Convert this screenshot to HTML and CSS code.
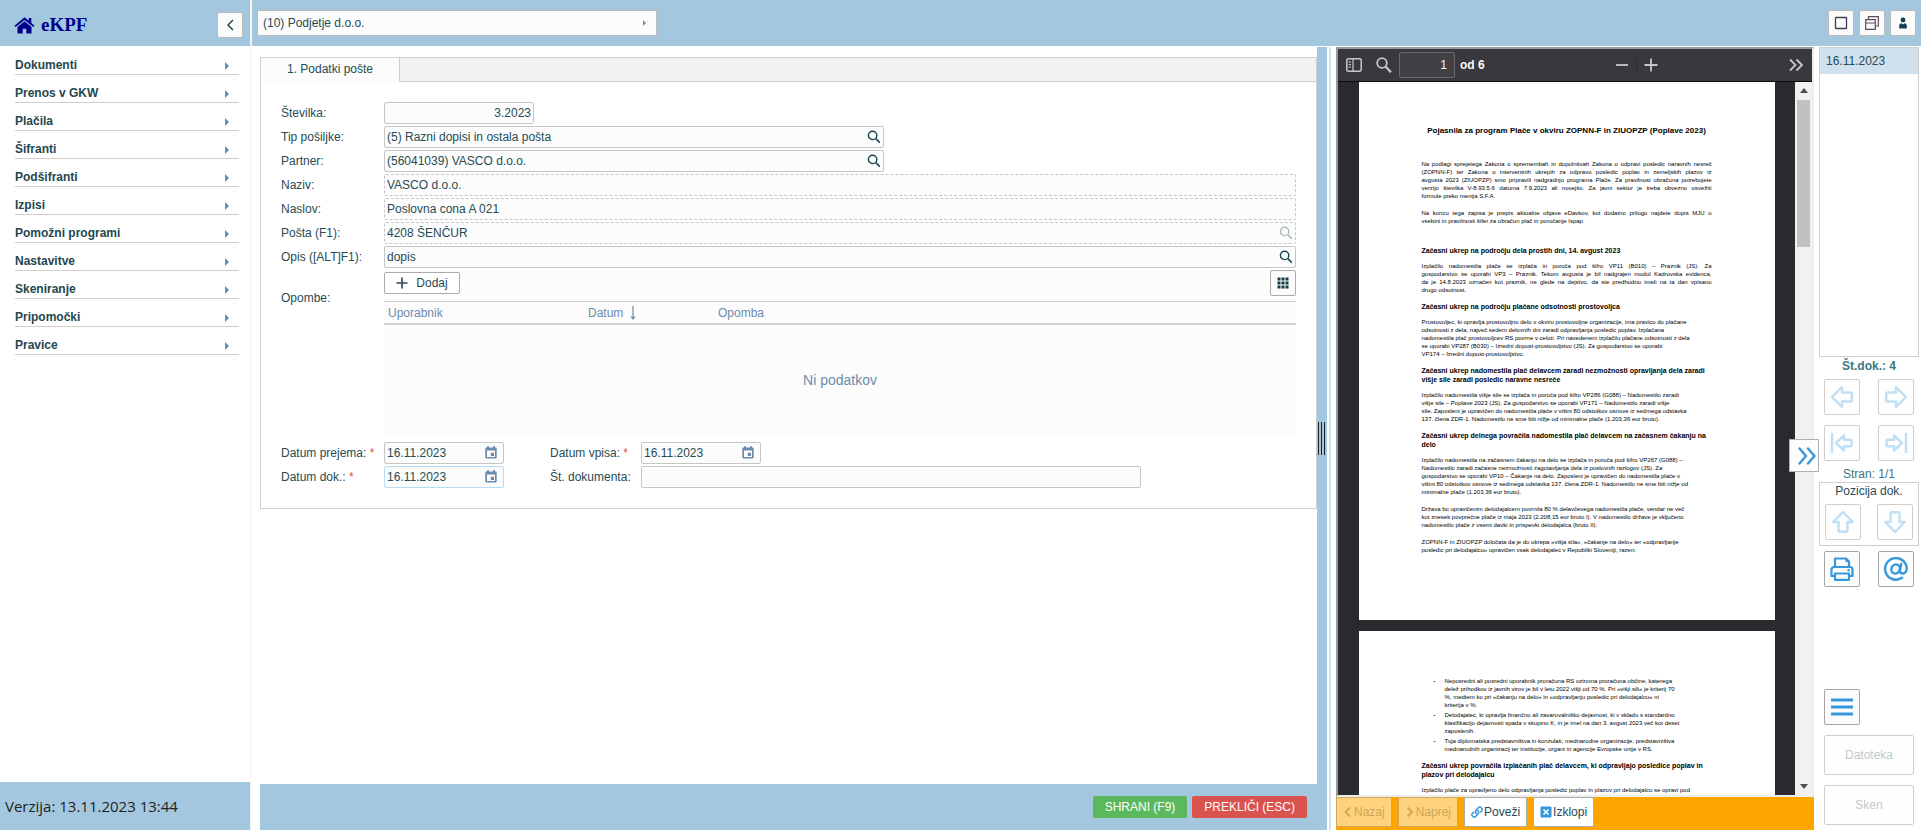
FILE: index.html
```html
<!DOCTYPE html>
<html lang="sl">
<head>
<meta charset="utf-8">
<title>eKPF</title>
<link rel="stylesheet" href="styles.css">
</head>
<body>
<svg class="defs" aria-hidden="true">
  <symbol id="search" viewBox="0 0 14 14"><circle cx="5.6" cy="5.4" r="4.200" fill="none" stroke="currentColor" stroke-width="1.4"/><path d="M8.6 8.5L12.8 12.6" stroke="currentColor" stroke-width="1.700"/></symbol>
  <symbol id="calendar" viewBox="0 0 12 13"><path d="M1.500 1.500h.5V.3h2v1.200h4V.3h2v1.200h.5c.7 0 1.200.5 1.200 1.200v8.600c0 .7-.5 1.200-1.200 1.200h-9c-.7 0-1.200-.5-1.200-1.200V2.700c0-.7.5-1.200 1.200-1.200zM2 4.600v6.300h8V4.600zM5.800 6.800h3.200v3.200H5.800z" fill="currentColor" fill-rule="evenodd"/></symbol>
  <symbol id="arrow" viewBox="0 0 24 24"><path d="M2 12L12 2.200V7.500H20.500a1.300 1.300 0 0 1 1.300 1.300V15.200a1.300 1.300 0 0 1-1.300 1.300H12V21.800z" fill="none" stroke="currentColor" stroke-width="2.400" stroke-linejoin="round"/></symbol>
  <symbol id="arrow-end" viewBox="0 0 24 24"><path d="M2 2V22M6 12L14 4.500V8.700H20.500a1 1 0 0 1 1 1V14.300a1 1 0 0 1-1 1H14V19.500z" fill="none" stroke="currentColor" stroke-width="2.400" stroke-linejoin="round"/></symbol>
</svg>

<div class="app">
  <aside class="sidebar">
    <header class="brand">
      <a class="brand-link" href="#">
        <svg class="house" viewBox="0 0 20 17"><path d="M10 .3L0 8.700l1.200 1.400L10 2.900l8.800 7.200L20 8.700l-3.200-2.700V1h-2.600v2.800z"/><path d="M10 4.300L3 10v6.600h5.200v-4.800h3.600v4.800H17V10z"/></svg>
        eKPF
      </a>
      <button class="icon-btn collapse" aria-label="Skrij meni"><svg viewBox="0 0 8 12"><path d="M7 1L2 6l5 5" fill="none" stroke="currentColor" stroke-width="1.500"/></svg></button>
    </header>
    <nav class="menu">
      <a href="#">Dokumenti</a>
      <a href="#">Prenos v GKW</a>
      <a href="#">Plačila</a>
      <a href="#">Šifranti</a>
      <a href="#">Podšifranti</a>
      <a href="#">Izpisi</a>
      <a href="#">Pomožni programi</a>
      <a href="#">Nastavitve</a>
      <a href="#">Skeniranje</a>
      <a href="#">Pripomočki</a>
      <a href="#">Pravice</a>
    </nav>
    <footer class="version">Verzija: 13.11.2023 13:44</footer>
  </aside>

  <div class="workspace">
    <header class="topbar">
      <button class="company">(10) Podjetje d.o.o.</button>
      <div class="top-actions">
        <button class="icon-btn" aria-label="Okno"><svg viewBox="0 0 14 14"><rect x="1.500" y="1.500" width="11" height="11" rx=".5" fill="none" stroke="#3b3f55" stroke-width="1.300"/></svg></button>
        <button class="icon-btn" aria-label="Okna"><svg viewBox="0 0 14 14"><path d="M3.500 3.500V.7h9.800V10H10.500M.7 3.700h9.600v9.600H.7zM.7 7h9.600" fill="none" stroke="#5b4a5e" stroke-width="1.200"/></svg></button>
        <button class="icon-btn" aria-label="Uporabnik"><svg viewBox="0 0 14 14"><circle cx="7" cy="4" r="2.400" fill="#153c4c"/><path d="M3.200 12.500V10c0-1.700 1.200-2.700 2.300-2.700L7 8.500l1.500-1.200c1.100 0 2.300 1 2.300 2.700v2.500z" fill="#153c4c"/></svg></button>
      </div>
    </header>

    <div class="panes">
      <main class="main">
        <section class="tabs">
          <div class="tab-strip"><button class="tab">1. Podatki pošte</button></div>
          <form class="form">
            <label for="stevilka">Številka:</label>
            <div class="field short"><input id="stevilka" class="number" value="3.2023"></div>
            <label for="tip">Tip pošiljke:</label>
            <div class="field medium"><input id="tip" value="(5) Razni dopisi in ostala pošta"><svg class="search"><use href="#search"/></svg></div>
            <label for="partner">Partner:</label>
            <div class="field medium"><input id="partner" value="(56041039) VASCO d.o.o."><svg class="search"><use href="#search"/></svg></div>
            <label for="naziv">Naziv:</label>
            <div class="field locked"><input id="naziv" value="VASCO d.o.o." readonly></div>
            <label for="naslov">Naslov:</label>
            <div class="field locked"><input id="naslov" value="Poslovna cona A 021" readonly></div>
            <label for="posta">Pošta (F1):</label>
            <div class="field locked"><input id="posta" value="4208 ŠENČUR" readonly><svg class="search"><use href="#search"/></svg></div>
            <label for="opis">Opis ([ALT]F1):</label>
            <div class="field"><input id="opis" value="dopis"><svg class="search"><use href="#search"/></svg></div>
            <span class="notes-label">Opombe:</span>
            <div class="notes">
              <div class="notes-bar">
                <button type="button" class="add"><svg viewBox="0 0 12 12"><path d="M6 .5v11M.5 6h11" stroke="currentColor" stroke-width="1.600"/></svg>Dodaj</button>
                <button type="button" class="icon-btn grid-btn" aria-label="Stolpci"><svg viewBox="0 0 12 12"><path d="M.5.500h3v3h-3zM4.500.500h3v3h-3zM8.500.500h3v3h-3zM.5 4.500h3v3h-3zM4.500 4.500h3v3h-3zM8.500 4.500h3v3h-3zM.5 8.500h3v3h-3zM4.500 8.500h3v3h-3zM8.500 8.500h3v3h-3z" fill="#153c45"/></svg></button>
              </div>
              <table class="notes-table">
                <thead><tr><th class="col-user">Uporabnik</th><th class="col-date">Datum<svg viewBox="0 0 8 14"><path d="M4 0v12M2 10.500L4 13l2-2.500" fill="none" stroke="currentColor" stroke-width="1.200"/></svg></th><th>Opomba</th></tr></thead>
                <tbody><tr><td colspan="3">Ni podatkov</td></tr></tbody>
              </table>
            </div>
            <label for="prejem">Datum prejema: <b>*</b></label>
            <div class="split">
              <div class="field date"><input id="prejem" value="16.11.2023"><svg class="cal"><use href="#calendar"/></svg></div>
              <label for="vpis">Datum vpisa: <b>*</b></label>
              <div class="field date"><input id="vpis" value="16.11.2023"><svg class="cal"><use href="#calendar"/></svg></div>
            </div>
            <label for="dok">Datum dok.: <b>*</b></label>
            <div class="split">
              <div class="field date focused"><input id="dok" value="16.11.2023"><svg class="cal"><use href="#calendar"/></svg></div>
              <label for="stdok">Št. dokumenta:</label>
              <div class="field medium"><input id="stdok" value=""></div>
            </div>
          </form>
        </section>
        <footer class="actions">
          <button class="save">SHRANI (F9)</button>
          <button class="cancel">PREKLIČI (ESC)</button>
        </footer>
      </main>

      <div class="splitter"><i></i><i></i><i></i></div>

      <section class="viewer">
        <div class="pdf">
          <div class="pdf-toolbar">
            <button aria-label="Stranska vrstica"><svg viewBox="0 0 16 16"><rect x=".8" y="1.800" width="14.400" height="12.400" rx="1.500" fill="none" stroke="currentColor" stroke-width="1.500"/><path d="M7 2v12M2.500 5H5M2.500 7.500H5M2.500 10H5" stroke="currentColor" stroke-width="1.200"/></svg></button>
            <button aria-label="Najdi"><svg viewBox="0 0 16 16"><circle cx="6" cy="6" r="4.800" fill="none" stroke="currentColor" stroke-width="1.800"/><path d="M9.500 9.500L15 15.300" stroke="currentColor" stroke-width="2.200"/></svg></button>
            <input class="page-no" aria-label="Stran" value="1">
            <span class="page-total">od 6</span>
            <span class="zoom-group">
              <button aria-label="Pomanjšaj"><svg viewBox="0 0 16 16"><path d="M2 8h12" stroke="currentColor" stroke-width="1.800"/></svg></button>
              <button class="zoom-in" aria-label="Povečaj"><svg viewBox="0 0 16 16"><path d="M1.500 8h13M8 1.500v13" stroke="currentColor" stroke-width="1.800"/></svg></button>
            </span>
            <button class="more" aria-label="Orodja"><svg viewBox="0 0 16 16"><path d="M2 2.500L7.500 8 2 13.500M8.500 2.500L14 8l-5.500 5.500" fill="none" stroke="currentColor" stroke-width="1.800"/></svg></button>
          </div>
          <div class="pdf-body">
            <div class="pages">
              <article class="page first">
                <h1>Pojasnila za program Plače v okviru ZOPNN-F in ZIUOPZP (Poplave 2023)</h1>
                <p class="just"><span>Na podlagi sprejetega Zakona o spremembah in dopolnitvah Zakona o odpravi posledic naravnih nesreč</span><span>(ZOPNN-F) ter Zakona o interventnih ukrepih za odpravo posledic poplav in zemeljskih plazov iz</span><span>avgusta 2023 (ZIUOPZP) smo pripravili nadgradnjo programa Plače. Za pravilnost obračuna potrebujete</span><span>verzijo številka V-8.93.5.6 datuma 7.9.2023 ali novejšo. Za javni sektor je treba obvezno osvežiti</span><span class="last">formule preko menija S.F.A.</span></p>
                <p class="just"><span>Na koncu tega zapisa je prepis aktualne objave eDavkov, kot dodatno prilogo najdete dopis MJU o</span><span class="last">vsebini in pravilnosti šifer za obračun plač in poročanje Ispap.</span></p>
                <h2 class="spaced">Začasni ukrep na področju dela prostih dni, 14. avgust 2023</h2>
                <p class="just"><span>Izplačilo nadomestila plače se izplača in poroča pod šifro VP11 (B010) – Praznik (JS). Za</span><span>gospodarstvo se uporabi VP3 – Praznik. Tekom avgusta je bil nadgrajen modul Kadrovska evidenca,</span><span>da je 14.8.2023 označen kot praznik, ne glede na dejstvo, da ste predhodno imeli na ta dan vpisano</span><span class="last">drugo odsotnost.</span></p>
                <h2>Začasni ukrep na področju plačane odsotnosti prostovoljca</h2>
                <p>Prostovoljec, ki opravlja prostovoljno delo v okviru prostovoljne organizacije, ima pravico do plačane<br>odsotnosti z dela, največ sedem delovnih dni zaradi odpravljanja posledic poplav. Izplačana<br>nadomestila plač prostovoljcev RS povrne v celoti. Pri navedenem izplačilu plačane odsotnosti z dela<br>se uporabi VP287 (B030) – Izredni dopust-prostovoljstvo (JS). Za gospodarstvo se uporabi<br>VP174 – Izredni dopust-prostovoljstvo.</p>
                <h2>Začasni ukrep nadomestila plač delavcem zaradi nezmožnosti opravljanja dela zaradi<br>višje sile zaradi posledic naravne nesreče</h2>
                <p>Izplačilo nadomestila višje sile se izplača in poroča pod šifro VP286 (G088) – Nadomestilo zaradi<br>višje sile – Poplave 2023 (JS). Za gospodarstvo se uporabi VP171 – Nadomestilo zaradi višje<br>sile. Zaposleni je upravičen do nadomestila plače v višini 80 odstotkov osnove iz sedmega odstavka<br>137. člena ZDR-1. Nadomestilo ne sme biti nižje od minimalne plače (1.203,36 eur bruto).</p>
                <h2>Začasni ukrep delnega povračila nadomestila plač delavcem na začasnem čakanju na<br>delo</h2>
                <p>Izplačilo nadomestila na začasnem čakanju na delo se izplača in poroča pod šifro VP267 (G088) –<br>Nadomestilo zaradi začasne nezmožnosti zagotavljanja dela iz poslovnih razlogov (JS). Za<br>gospodarstvo se uporabi VP10 – Čakanje na delo. Zaposleni je upravičen do nadomestila plače v<br>višini 80 odstotkov osnove iz sedmega odstavka 137. člena ZDR-1. Nadomestilo ne sme biti nižje od<br>minimalne plače (1.203,36 eur bruto).</p>
                <p>Država bo upravičenim delodajalcem povrnila 80 % delavčevega nadomestila plače, vendar ne več<br>kot znesek povprečne plače iz maja 2023 (2.208,15 eur bruto I). V nadomestilo države je vključeno<br>nadomestilo plače z vsemi davki in prispevki delodajalca (bruto II).</p>
                <p>ZOPNN-F in ZIUOPZP določata da je do ukrepa »višja sila«, »čakanje na delo« ter »odpravljanje<br>posledic pri delodajalcu« upravičen vsak delodajalec v Republiki Sloveniji, razen:</p>
              </article>
              <article class="page second">
                <ul>
                  <li>Neposredni ali posredni uporabnik proračuna RS oziroma proračuna občine, katerega<br>delež prihodkov iz javnih virov je bil v letu 2022 višji od 70 %. Pri »višji sili« je kriterij 70<br>%, medtem ko pri »čakanju na delo« in »odpravljanju posledic pri delodajalcu« ni<br>kriterija v %.</li>
                  <li>Delodajalec, ki opravlja finančno ali zavarovalniško dejavnost, ki v skladu s standardno<br>klasifikacijo dejavnosti spada v skupino K, in je imel na dan 3. avgust 2023 več kot deset<br>zaposlenih.</li>
                  <li>Tuja diplomatska predstavništva in konzulati, mednarodne organizacije, predstavništva<br>mednarodnih organizacij ter institucije, organi in agencije Evropske unije v RS.</li>
                </ul>
                <h2>Začasni ukrep povračila izplačanih plač delavcem, ki odpravljajo posledice poplav in<br>plazov pri delodajalcu</h2>
                <p>Izplačilo plače za opravljeno delo odpravljanja posledic poplav in plazov pri delodajalcu se opravi pod</p>
              </article>
            </div>
            <div class="scrollbar"><i class="scroll-up"></i><i class="thumb"></i><i class="scroll-down"></i></div>
          </div>
        </div>
        <div class="link-bar">
          <button disabled><svg viewBox="0 0 10 12"><path d="M7 1.500L2.500 6 7 10.500" fill="none" stroke="currentColor" stroke-width="1.800"/></svg>Nazaj</button>
          <button disabled><svg viewBox="0 0 10 12"><path d="M2.500 1.500L7 6l-4.500 4.500" fill="none" stroke="currentColor" stroke-width="1.800"/></svg>Naprej</button>
          <button><svg class="wide" viewBox="0 0 12 12"><g fill="none" stroke="#3498db" stroke-width="1.500" stroke-linecap="round"><path d="M5.200 7.600a2.300 2.300 0 0 1-.2-3.200l2-2.400a2.300 2.300 0 0 1 3.500 3L9.600 6"/><path d="M6.800 4.600a2.300 2.300 0 0 1 .2 3.200L5 10.200a2.300 2.300 0 0 1-3.500-3L2.400 6.200"/></g></svg>Poveži</button>
          <button><svg class="wide" viewBox="0 0 12 12"><rect x=".5" y=".5" width="11" height="11" rx="1" fill="#3498db"/><path d="M3.500 3.500l5 5M8.500 3.500l-5 5" stroke="#fff" stroke-width="1.600"/></svg>Izklopi</button>
        </div>
        <button class="toggle" aria-label="Razširi"><svg viewBox="0 0 18 18"><path d="M1.500 1.500L8 9l-6.500 7.500M10 1.500L16.500 9 10 16.500" fill="none" stroke="currentColor" stroke-width="2.400" stroke-linecap="round"/></svg></button>
      </section>

      <aside class="tools">
        <div class="doc-list"><div class="doc-item">16.11.2023</div></div>
        <div class="count">Št.dok.: 4</div>
        <div class="pair">
          <button disabled aria-label="Prejšnji"><svg><use href="#arrow"/></svg></button>
          <button disabled aria-label="Naslednji"><svg class="flip"><use href="#arrow"/></svg></button>
          <button disabled aria-label="Prvi"><svg><use href="#arrow-end"/></svg></button>
          <button disabled aria-label="Zadnji"><svg class="flip"><use href="#arrow-end"/></svg></button>
        </div>
        <div class="page-pos">Stran: 1/1</div>
        <div class="position">
          <span>Pozicija dok.</span>
          <div class="pair near">
            <button disabled aria-label="Gor"><svg class="up"><use href="#arrow"/></svg></button>
            <button disabled aria-label="Dol"><svg class="down"><use href="#arrow"/></svg></button>
          </div>
        </div>
        <div class="pair">
          <button aria-label="Natisni"><svg viewBox="0 0 24 24"><g fill="none" stroke="currentColor" stroke-width="2.200" stroke-linejoin="round"><path d="M5 10V1.500H16L19 4.500V10"/><path d="M5 19H1.500V12.500A2.500 2.500 0 0 1 4 10H20A2.500 2.500 0 0 1 22.500 12.500V19H19"/><path d="M5 16.500H19V22.800H5z"/></g><path d="M15.500 1.500V5H19z"/><circle cx="18.500" cy="13.200" r="1.200"/></svg></button>
          <button aria-label="E-pošta"><svg viewBox="0 0 24 24"><g fill="none" stroke="currentColor" stroke-width="2.400" stroke-linecap="round"><path d="M18 20.800A10.800 10.800 0 1 1 22.700 11.500C22.700 14.500 20.800 16.500 18.600 16.500 16.500 16.500 15.700 15 16 13L17.200 7"/><ellipse cx="11.600" cy="12" rx="4.200" ry="4.700" transform="rotate(25 11.600 12)"/></g></svg></button>
        </div>
        <div class="spacer"></div>
        <div class="pair"><button aria-label="Meni"><svg viewBox="0 0 24 24"><path d="M1 5h22M1 12h22M1 19h22" stroke="currentColor" stroke-width="2.800"/></svg></button></div>
        <button class="block" disabled>Datoteka</button>
        <button class="block" disabled>Sken</button>
      </aside>
    </div>
  </div>
</div>
</body>
</html>
```

FILE: styles.css
```css
* { box-sizing: border-box; }

body {
  margin: 0;
  background: #fff;
  color: #274b54;
  font: 12px/16px "Liberation Sans", Arial, sans-serif;
}

button, input {
  margin: 0;
  padding: 0;
  font: inherit;
  color: inherit;
}

button { cursor: pointer; }
svg { display: block; flex: none; }
.defs { position: absolute; width: 0; height: 0; }

.app {
  display: grid;
  grid-template-columns: 250px minmax(0, 1fr);
  gap: 2px;
  height: 100vh;
  overflow: hidden;
}

/* Sidebar */
.sidebar {
  display: flex;
  flex-direction: column;
  box-shadow: 1px 0 1px #f0f0f0;
}

.brand {
  display: flex;
  align-items: center;
  justify-content: space-between;
  height: 46px;
  padding: 4px 7px 0 14px;
  background: #a4c7e0;
}

.brand-link {
  display: flex;
  align-items: center;
  gap: 6px;
  color: #00008b;
  font: bold 19px/20px "Liberation Serif", "Times New Roman", serif;
  text-decoration: none;
}

.house { width: 21px; height: 17px; fill: #00008b; }

.icon-btn {
  display: flex;
  align-items: center;
  justify-content: center;
  width: 26px;
  height: 26px;
  background: #fcfcfc;
  border: 1px solid #bdbab9;
  border-radius: 2px;
}

.icon-btn svg { width: 14px; height: 14px; }
.collapse svg { width: 8px; height: 12px; }

.menu {
  flex: 1;
  display: flex;
  flex-direction: column;
  gap: 4px;
  padding: 5px 11px 0 15px;
}

.menu a {
  display: flex;
  align-items: center;
  justify-content: space-between;
  height: 24px;
  padding: 4px 10px 0 0;
  border-bottom: 1px solid #cfcfcf;
  color: #24474f;
  font-weight: bold;
  text-decoration: none;
}

.menu a::after,
.company::after {
  content: "";
  border: solid transparent;
  border-width: 4px 0 4px 4px;
  border-left-color: #6a8cab;
}

.menu a::after { margin-top: 2px; }

.version {
  height: 48px;
  padding: 0 5px;
  background: #a4c7e0;
  color: #222;
  font: 15px/48px "Open Sans", "Noto Sans", sans-serif;
}

/* Top bar */
.workspace {
  display: flex;
  flex-direction: column;
  min-width: 0;
  min-height: 0;
}

.topbar {
  display: flex;
  align-items: center;
  justify-content: space-between;
  height: 46px;
  flex: none;
  padding: 0 5px;
  background: #a4c7e0;
}

.company {
  display: flex;
  align-items: center;
  justify-content: space-between;
  width: 400px;
  height: 26px;
  padding: 0 10px 0 5px;
  background: #fcfcfc;
  border: 1px solid #bdbab9;
}

.company::after { border-width: 3px 0 3px 3px; }
.top-actions { display: flex; gap: 5px; }

.panes {
  flex: 1;
  display: grid;
  grid-template-columns: minmax(0, 1065fr) 10px minmax(0, 487fr) 107px;
  min-height: 0;
}

/* Form */
.main {
  display: flex;
  flex-direction: column;
  justify-content: space-between;
  padding: 11px 0 0 8px;
}

.tabs { border: 1px solid #cfcfcf; }

.tab-strip {
  display: flex;
  height: 24px;
  background: linear-gradient(#cfcfcf, #cfcfcf) bottom / 100% 1px no-repeat #f2f2f2;
}

.tab {
  width: 139px;
  padding-bottom: 2px;
  background: #fcfcfc;
  border: 0;
  border-right: 1px solid #cfcfcf;
}

.form {
  display: grid;
  grid-template-columns: 103px minmax(0, 1fr);
  row-gap: 2px;
  align-items: center;
  padding: 20px;
}

.form b { color: #e0504d; font-weight: normal; }

.field {
  display: flex;
  align-items: center;
  height: 22px;
  background: #fcfcfc;
  border: 1px solid #c6c6c6;
  border-radius: 2px;
}

.field input {
  flex: 1;
  min-width: 0;
  height: 20px;
  padding: 0 2px;
  background: none;
  border: 0;
  outline: 0;
}

.field .number { text-align: right; }
.short { width: 150px; }
.medium { width: 500px; }
.date { width: 120px; }
.locked { border-style: dashed; }
.locked .search { opacity: .35; }
.focused { border-color: #b5dbf7; }
.search { width: 14px; height: 14px; margin-right: 2px; color: #1b4450; }
.cal { width: 12px; height: 13px; margin: 0 6px 2px 0; color: #6d8bad; }

.split {
  display: grid;
  grid-template-columns: 166px 91px minmax(0, 1fr);
  align-items: center;
}

.notes-label { align-self: start; padding-top: 20px; }
.notes { margin-bottom: 5px; background: #fcfcfc; }

.notes-bar {
  display: flex;
  justify-content: space-between;
  align-items: center;
  height: 31px;
  padding-bottom: 5px;
}

.add {
  display: flex;
  align-items: center;
  justify-content: center;
  gap: 8px;
  width: 76px;
  height: 22px;
  background: #fff;
  border: 1px solid #ababab;
  border-radius: 2px;
}

.add svg { width: 12px; height: 12px; }
.grid-btn { border-color: #ababab; }
.grid-btn svg { width: 12px; height: 12px; }

.notes-table {
  width: 100%;
  table-layout: fixed;
  border-collapse: separate;
  border-spacing: 0;
  color: #6d8bad;
}

.notes-table th {
  height: 24px;
  padding: 0 4px;
  border-top: 1px solid #cfcfcf;
  border-bottom: 2px solid #cfcfcf;
  font-weight: normal;
  text-align: left;
}

.notes-table .col-user { width: 200px; }
.notes-table .col-date { width: 130px; }
.notes-table th svg { display: inline-block; width: 8px; height: 14px; margin-left: 6px; vertical-align: middle; }
.notes-table td { height: 110px; padding: 0; font-size: 14px; text-align: center; }

.actions {
  display: flex;
  align-items: center;
  justify-content: flex-end;
  gap: 5px;
  height: 46px;
  padding-right: 10px;
  background: #a4c7e0;
}

.actions button {
  height: 22px;
  padding: 0 12px;
  border: 0;
  border-radius: 2px;
  color: #fff;
}

.actions .save { background: #5cb85c; }
.actions .cancel { background: #d9534f; }

.splitter {
  display: flex;
  align-items: center;
  gap: 2px;
  margin-top: 1px;
  padding-left: 1px;
  background: #a4c7e0;
}

.splitter i { width: 1px; height: 33px; background: #222; }

/* Document viewer */
.viewer {
  position: relative;
  display: flex;
  flex-direction: column;
  min-height: 0;
  margin: 1px 0 0 2px;
  padding-left: 5px;
  border-left: 2px solid #d3e4f1;
}

.pdf {
  flex: 1;
  display: flex;
  flex-direction: column;
  min-height: 0;
  border: solid #9a9a9a;
  border-width: 2px 0 0 2px;
  border-right: 2px solid #eee;
  border-bottom: 2px solid #eee;
}

.pdf-toolbar {
  display: flex;
  align-items: center;
  height: 33px;
  flex: none;
  padding: 0 8px;
  background: #38383d;
  border-bottom: 1px solid #0c0c0d;
  color: #f9f9fa;
}

.pdf-toolbar button {
  display: flex;
  margin-right: 14px;
  background: none;
  border: 0;
  color: #c8c8ca;
}

.pdf-toolbar svg { width: 16px; height: 16px; }

.page-no {
  width: 56px;
  height: 26px;
  margin: 0 5px 0 -7px;
  padding: 0 7px;
  background: #404045;
  border: 1px solid #6a6a6e;
  border-radius: 2px;
  text-align: right;
}

.page-total { font-weight: bold; }
.zoom-group { display: flex; margin-left: auto; }
.zoom-group button { margin-right: 6px; }
.zoom-group .zoom-in { padding-left: 6px; border-left: 1px solid #2c2c30; }
.pdf-toolbar .more { margin: 0 0 0 123px; }

.pdf-body {
  flex: 1;
  display: flex;
  min-height: 0;
  background: #2a2a2e;
}

.pages {
  flex: 1;
  display: flex;
  flex-direction: column;
  align-items: center;
  gap: 11px;
  overflow: hidden;
}

.page {
  flex: none;
  width: 416px;
  padding: 0 63px;
  background: #fff;
  color: #000;
  font-size: 6px;
  line-height: 8px;
  white-space: nowrap;
}

.page.first { padding-top: 44px; padding-bottom: 66px; }
.page.second { padding-top: 46px; padding-bottom: 66px; }

.page h1 { margin: 0 0 24px; font-size: 8px; line-height: 10px; text-align: center; }
.page h2 { margin: 8px 0 7px; font-size: 7px; line-height: 9px; }
.page h2.spaced { margin-top: 21px; }
.page p { margin: 0; }
.page p + p { margin-top: 9px; }
.just span { display: block; text-align-last: justify; }
.just .last { text-align-last: left; }

.page ul { margin: 0 0 7px; padding: 0 0 0 23px; list-style: none; }
.page li { margin-bottom: 2px; }
.page li::before { content: "-"; float: left; margin-left: -11px; font-weight: bold; }

.scrollbar {
  display: flex;
  flex-direction: column;
  align-items: center;
  width: 17px;
  padding: 6px 0;
  background: #f1f1f1;
}

.thumb { width: 13px; height: 147px; margin: 7px 0 auto; background: #c1c1c1; }
.scroll-up, .scroll-down { border: solid transparent; }
.scroll-up { border-width: 0 4px 5px; border-bottom-color: #505050; }
.scroll-down { border-width: 5px 4px 0; border-top-color: #505050; }

.link-bar {
  display: flex;
  gap: 6px;
  height: 33px;
  flex: none;
  background: #ffa500;
}

.link-bar button {
  display: flex;
  align-items: center;
  gap: 1px;
  height: 30px;
  padding: 0 6px;
  background: #fff;
  border: 1px solid #ababab;
  border-radius: 2px;
}

.link-bar button:disabled { opacity: .5; color: #9aa9a8; }
.link-bar svg { width: 10px; height: 12px; }
.link-bar .wide { width: 12px; }

.toggle {
  position: absolute;
  top: 392px;
  right: -5px;
  z-index: 1;
  display: flex;
  align-items: center;
  justify-content: flex-end;
  width: 30px;
  height: 33px;
  padding-right: 2px;
  background: #fcfcfc;
  border: 1px solid #b0b0b0;
  color: #3498db;
}

.toggle svg { width: 18px; height: 18px; }

/* Tools */
.tools {
  display: flex;
  flex-direction: column;
  min-height: 0;
  padding: 1px 2px 5px 5px;
  text-align: center;
}

.doc-list { height: 310px; border: 1px solid #cfcfcf; flex: none; }
.doc-item { padding: 5px 6px; background: #d0e0ed; text-align: left; }
.count { padding: 1px 0 5px; color: #3d7784; font-weight: bold; }

.pair {
  display: grid;
  grid-template-columns: 36px 36px;
  gap: 10px 18px;
  justify-content: center;
}

.pair.near { column-gap: 16px; }

.tools button {
  display: flex;
  align-items: center;
  justify-content: center;
  height: 36px;
  background: #fcfcfc;
  border: 1px solid #a5a5a5;
  border-radius: 2px;
  color: #3498db;
}

.tools button:disabled { opacity: .3; border-color: #606060; }
.tools button svg { width: 24px; height: 24px; fill: currentColor; }
.flip { transform: rotate(180deg); }
.up { transform: rotate(90deg); }
.down { transform: rotate(-90deg); }

.page-pos { padding: 5px 0 0; color: #3d7784; }
.position { padding: 0 0 5px; margin-bottom: 5px; border: 1px solid #cfcfcf; }
.position span { display: block; margin-bottom: 5px; }
.spacer { flex: 1; }

.tools .block {
  height: 40px;
  margin: 10px 5px 0;
  color: #274b54;
}
```
